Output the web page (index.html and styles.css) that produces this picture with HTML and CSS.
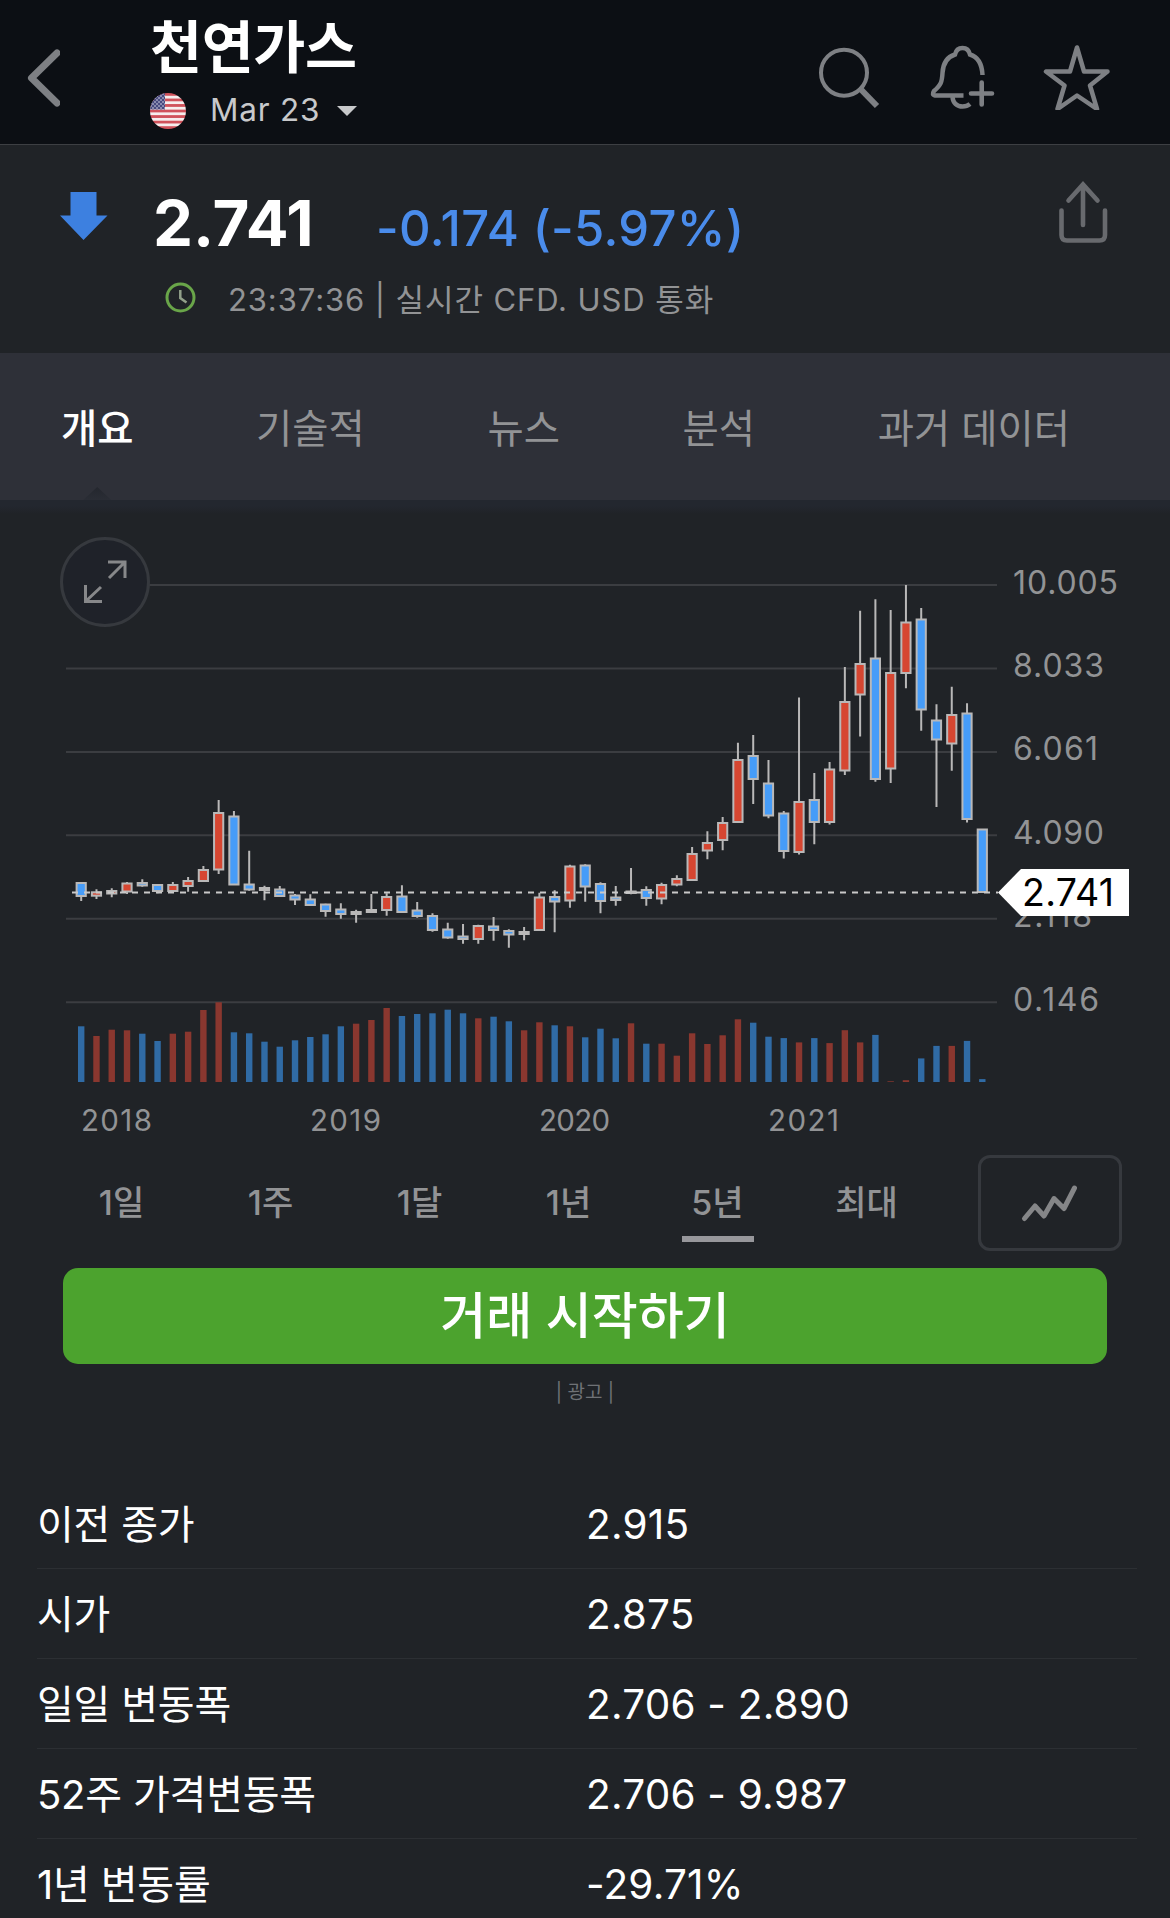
FILE: index.html
```html
<!DOCTYPE html>
<html lang="ko">
<head>
    <meta charset="UTF-8">
    <meta name="viewport" content="width=device-width, initial-scale=1.0">
    <title>천연가스</title>
    <link rel="stylesheet" href="styles.css">
</head>
<body>
    <header class="topbar">
        <svg class="back" width="34" height="60" viewBox="26 48 34 60">
            <path d="M57 53L31.500 78L57 103"/>
        </svg>
        <div class="heading">
            <h1>천연가스</h1>
            <div class="contract">
                <svg width="36" height="36" viewBox="0 0 36 36">
                    <defs>
                        <clipPath id="round"><circle cx="18" cy="18" r="18"/></clipPath>
                        <pattern id="stripes" width="36" height="5.540" patternUnits="userSpaceOnUse">
                            <rect width="36" height="5.540" fill="#f6eeee"/>
                            <rect width="36" height="2.770" fill="#d0525b"/>
                        </pattern>
                        <pattern id="stars" width="4" height="4" patternUnits="userSpaceOnUse">
                            <rect width="4" height="4" fill="#484a80"/>
                            <circle cx="1" cy="1" r=".8" fill="#dcdcea"/>
                            <circle cx="3" cy="3" r=".8" fill="#dcdcea"/>
                        </pattern>
                    </defs>
                    <g clip-path="url(#round)">
                        <rect width="36" height="36" fill="url(#stripes)"/>
                        <rect width="15" height="16.500" fill="url(#stars)"/>
                    </g>
                </svg>
                <span>Mar 23</span>
                <i class="caret"></i>
            </div>
        </div>
        <div class="actions">
            <svg width="64" height="64" viewBox="816 46 64 64">
                <circle cx="844" cy="72.700" r="23" stroke-width="4"/>
                <path d="M861 89.500L877 106" stroke-width="6"/>
            </svg>
            <svg width="68" height="68" viewBox="928 44 68 68" stroke-width="4.500">
                <path d="M963.500 95.500H935Q931.500 95 934 91C941 85 942 82 942.500 73C943 63 947 57 955 54.500C956 50 959 48 962.500 48S969 50 970 54.500C978 57 982 63 982.500 75"/>
                <path d="M952.500 97C953 103 957 106.500 962.500 106.500Q967 106.500 970 104"/>
                <path d="M981.700 82.500V104.500M971 93.500H992" stroke-width="4.600" stroke-linecap="round"/>
            </svg>
            <svg width="70" height="68" viewBox="1042 42 70 68" stroke-width="4.500">
                <path d="M1077 47.500L1084 71.500H1107.500L1090 85.500L1097 109L1077 95.500L1057.500 109L1064.500 85.500L1046 71.500H1070Z" stroke-linejoin="round"/>
            </svg>
        </div>
    </header>

    <section class="quote">
        <svg class="down" width="48" height="48" viewBox="0 0 48 48">
            <path d="M10.500 0H36.500V23.500H47.500L23.500 48L0 23.500H10.500Z"/>
        </svg>
        <div class="quote-body">
            <div class="prices">
                <span class="last">2.741</span>
                <span class="change">-0.174 (-5.97%)</span>
            </div>
            <div class="time">
                <svg width="31" height="31" viewBox="0 0 31 31">
                    <circle cx="15.500" cy="15.500" r="13.500"/>
                    <path d="M15.300 8V16L21.500 20.500"/>
                </svg>
                <span>23:37:36 | 실시간 CFD. USD 통화</span>
            </div>
        </div>
        <svg class="share" width="50" height="64" viewBox="1058 181 50 64">
            <path d="M1083 225V185M1068.500 200.500L1083 184.500L1097.500 200.500M1061.500 210.500V235Q1061.500 240.500 1067 240.500H1099.500Q1105 240.500 1105 235V210.500"/>
        </svg>
    </section>

    <nav class="tabs">
        <a class="active">개요</a>
        <a>기술적</a>
        <a>뉴스</a>
        <a>분석</a>
        <a>과거 데이터</a>
    </nav>

    <section class="chart">
        <svg id="chart" width="1170" height="640" viewBox="0 500 1170 640"></svg>
        <button class="expand">
            <svg width="46" height="46" viewBox="82 559 46 46">
                <path d="M108 562H125V578M125 562L109 578M85.500 585V601.500H102M85.500 601.500L101 587"/>
            </svg>
        </button>
    </section>

    <div class="periods">
        <a>1일</a>
        <a>1주</a>
        <a>1달</a>
        <a>1년</a>
        <a class="selected">5년</a>
        <a>최대</a>
        <button class="chart-type">
            <svg width="60" height="40" viewBox="1021 1183 60 40">
                <path d="M1025.500 1218.500L1036 1206L1045 1216L1055 1198.500L1065 1208.500L1075.500 1188"/>
            </svg>
        </button>
    </div>

    <button class="trade">거래 시작하기</button>
    <div class="ad">| 광고 |</div>

    <dl class="stats">
        <div><dt>이전 종가</dt><dd>2.915</dd></div>
        <div><dt>시가</dt><dd>2.875</dd></div>
        <div><dt>일일 변동폭</dt><dd>2.706 - 2.890</dd></div>
        <div><dt>52주 가격변동폭</dt><dd>2.706 - 9.987</dd></div>
        <div><dt>1년 변동률</dt><dd>-29.71%</dd></div>
    </dl>

    <script src="chart.js"></script>
</body>
</html>
```
FILE: styles.css
```css
* {
    box-sizing: border-box;
}
body {
    margin: 0;
    width: 1170px;
    height: 1918px;
    overflow: hidden;
    background-color: #202327;
    color: #fff;
    font-family: Inter, "Noto Sans CJK KR", sans-serif;
}
svg {
    display: block;
    fill: none;
    flex: none;
}
button {
    border: none;
    padding: 0;
    font-family: inherit;
    color: inherit;
}

/* top bar */
.topbar {
    display: flex;
    height: 145px;
    background-color: #0c0f14;
    border-bottom: 1px solid #3d3f43;
    padding: 0 58px 0 26px;
}
.back {
    margin-top: 48px;
    stroke: #7e8084;
    stroke-width: 7;
    stroke-linecap: round;
    stroke-linejoin: round;
}
.heading {
    margin-left: 90px;
    flex: 1;
}
h1 {
    margin: 15px 0 0;
    font-size: 56.5px;
    line-height: 66px;
    font-weight: 700;
    letter-spacing: -0.3px;
}
.contract {
    display: flex;
    align-items: center;
    height: 36px;
    margin-top: 12px;
    font-size: 31.5px;
    line-height: 34px;
    color: #c8c9cb;
    letter-spacing: 0.8px;
}
.contract span {
    margin: -2px 17px 0 24px;
}
.caret {
    border: 10px solid transparent;
    border-top-color: #c8c9cb;
    border-bottom: none;
}
.actions {
    display: flex;
    margin-top: 42px;
    stroke: #7e8084;
}
.actions svg:nth-child(1) {
    margin: 4px 48px 0 0;
}
.actions svg:nth-child(2) {
    margin: 2px 46px 0 0;
}

/* quote */
.quote {
    display: flex;
    height: 208px;
    padding: 0 62px 0 60px;
}
.down {
    margin-top: 47px;
    fill: #3d80e0;
}
.quote-body {
    flex: 1;
    margin-left: 45px;
    padding-top: 38px;
}
.prices {
    display: flex;
    align-items: baseline;
    height: 80px;
    line-height: 80px;
}
.last {
    width: 223px;
    font-size: 63.5px;
    font-weight: 700;
}
.change {
    font-size: 49px;
    font-weight: 500;
    letter-spacing: 0.35px;
    color: #4a8ceb;
}
.time {
    display: flex;
    align-items: center;
    height: 40px;
    margin: 14px 0 0 12px;
    font-size: 31px;
    letter-spacing: 0.9px;
    color: #929395;
}
.time svg {
    margin-right: 32px;
    stroke: #92a08a;
    stroke-width: 2.5;
}
.time circle {
    stroke: #69a549;
    stroke-width: 3;
}
.share {
    margin-top: 36px;
    stroke: #686a6e;
    stroke-width: 4.6;
    stroke-linecap: round;
}

/* tabs */
.tabs {
    display: flex;
    justify-content: space-between;
    height: 147px;
    padding: 0 100px 0 61px;
    background-color: #2e3038;
    font-size: 39.4px;
    line-height: 152px;
    color: #929395;
}
.tabs .active {
    position: relative;
    color: #fff;
    font-weight: 500;
}
.tabs .active::after {
    content: "";
    position: absolute;
    left: 50%;
    bottom: 0;
    width: 28px;
    height: 13px;
    margin-left: -14px;
    background-image: linear-gradient(#24272e, #2a2d35);
    clip-path: polygon(50% 0, 100% 100%, 0 100%);
}

/* chart */
.chart {
    position: relative;
    height: 640px;
    background-image: linear-gradient(#23272f, #23272f 6px, #202327 14px);
}
.grid {
    stroke: #3b3d41;
    stroke-width: 2;
}
.label {
    fill: #929395;
    font-size: 32px;
}
.year {
    fill: #929395;
    font-size: 29.5px;
}
.candle {
    stroke: #b9b8b8;
    stroke-width: 2;
}
.candle.up {
    fill: #d64631;
}
.candle.down-day {
    fill: #469cf8;
}
.volume.up {
    fill: #8a372f;
}
.volume.down-day {
    fill: #306ba5;
}
.now {
    stroke: #c9c9c9;
    stroke-width: 2;
    stroke-dasharray: 6 6;
}
.tag {
    fill: #fff;
}
.tag-text {
    fill: #000;
    font-size: 37.5px;
}
.expand {
    position: absolute;
    left: 60px;
    top: 37px;
    width: 90px;
    height: 90px;
    border: 3px solid #36393e;
    border-radius: 50%;
    background-color: #1f2229;
}
.expand svg {
    margin: auto;
    stroke: #87888a;
    stroke-width: 3;
}

/* periods */
.periods {
    display: grid;
    grid-template-columns: repeat(6, 149px) 144px;
    justify-items: center;
    height: 128px;
    padding: 15px 0 0 47px;
    font-size: 34px;
    line-height: 96px;
    font-weight: 500;
    color: #929395;
}
.periods .selected {
    width: 72px;
    height: 87px;
    text-align: center;
    border-bottom: 6px solid #97979b;
}
.chart-type {
    width: 144px;
    height: 96px;
    margin-left: 74px;
    border: 3px solid #36393e;
    border-radius: 12px;
    background: none;
}
.chart-type svg {
    margin: -1px auto 0;
    stroke: #858688;
    stroke-width: 5;
    stroke-linecap: round;
    stroke-linejoin: round;
}

.trade {
    display: block;
    width: 1044px;
    height: 96px;
    margin: 0 63px;
    padding-bottom: 8px;
    border-radius: 15px;
    background-color: #4ca32e;
    font-size: 50px;
    font-weight: 500;
}
.ad {
    height: 115px;
    padding-top: 15px;
    text-align: center;
    font-size: 19px;
    line-height: 28px;
    color: #6f7276;
}

/* stats */
.stats {
    margin: 0 33px 0 37px;
    font-size: 40px;
}
.stats div {
    display: grid;
    grid-template-columns: 549px 1fr;
    height: 90px;
    line-height: 91px;
    border-bottom: 1px solid #2c2f33;
}
.stats dt {
    letter-spacing: -0.2px;
}
.stats dd {
    margin: 0;
    font-size: 40.5px;
    letter-spacing: 0.2px;
}
```
FILE: chart.js
```javascript
// [direction, high, body top, body bottom, low, volume]
const candles = [
    ['d', 882.3, 883, 896, 901, 55.7],
    ['u', 889.3, 892.3, 895.7, 899, 46],
    ['u', 888.3, 891, 893.5, 897.3, 52.3],
    ['u', 882, 883.5, 891.5, 894, 51.7],
    ['d', 879.3, 883, 885.5, 886.7, 48.3],
    ['d', 884, 885, 891, 893.3, 41],
    ['u', 882, 885, 891, 892.7, 48.3],
    ['u', 877, 881, 886, 891.7, 50.3],
    ['u', 866, 870, 881, 882, 72],
    ['u', 800, 813, 869.5, 874, 79.7],
    ['d', 811, 816.5, 884.5, 885, 49.7],
    ['d', 850.7, 884.5, 889.5, 890.7, 48.7],
    ['d', 885.7, 888, 890, 900.3, 40.3],
    ['d', 886, 889.5, 896, 896.7, 35.3],
    ['d', 894, 895.5, 899.5, 905, 41.7],
    ['d', 894.3, 899.5, 905, 905.7, 45],
    ['d', 903.7, 904.5, 911, 916.7, 47.7],
    ['d', 903.3, 909.5, 914, 918.7, 55.7],
    ['u', 909.7, 912, 914, 922.7, 58.3],
    ['u', 894, 910, 912, 912.7, 62],
    ['u', 893.3, 897, 910, 915.7, 74],
    ['d', 885.3, 896.5, 912, 912.7, 66],
    ['d', 902, 910.5, 916, 917.7, 68],
    ['d', 913.3, 916, 930, 931.7, 68.7],
    ['d', 922.7, 929.5, 937.5, 938.7, 72.3],
    ['d', 924, 936.5, 939, 943.7, 68.7],
    ['u', 924.7, 926, 939, 943.7, 63.7],
    ['d', 917, 926.5, 930, 940.7, 65.3],
    ['d', 929.3, 931, 934.5, 947.7, 60.7],
    ['u', 927, 932, 934, 940.3, 51.7],
    ['u', 892.7, 897.5, 930, 930.7, 59.7],
    ['d', 890.3, 897, 901.5, 932.3, 56.7],
    ['u', 864.7, 866.5, 900.5, 907.7, 55.7],
    ['d', 864.3, 865.5, 886.5, 901.7, 44.7],
    ['d', 882.3, 884, 901, 913.3, 53.3],
    ['d', 886, 897.5, 900, 905.7, 43.7],
    ['u', 868, 891.5, 893, 894.3, 58.7],
    ['d', 886.3, 890, 898, 905.7, 38.3],
    ['u', 882.7, 885, 898.5, 904.3, 38.3],
    ['u', 875.3, 879, 884.5, 886.3, 26.3],
    ['u', 847, 854, 880, 881, 48.7],
    ['u', 831.3, 843, 850.5, 859.3, 38],
    ['u', 817, 823, 840, 850.3, 46.7],
    ['u', 742.7, 760, 822, 823, 62.7],
    ['d', 735, 756, 779, 804, 59.3],
    ['d', 760, 783.5, 815.5, 818.2, 45.3],
    ['d', 811, 813.5, 851, 858.6, 43.9],
    ['u', 697.5, 802, 852, 854.6, 39.6],
    ['d', 772.9, 800, 822, 844.3, 43.9],
    ['u', 762, 769.5, 822, 824.6, 38.9],
    ['u', 667, 702, 770.5, 775, 51.8],
    ['u', 610.7, 664, 694.5, 736.4, 39.6],
    ['d', 599.3, 658.5, 779, 781.8, 47.1],
    ['u', 610, 673, 768.5, 782.9, 0.7],
    ['u', 585, 622.5, 673, 688.2, 1.8],
    ['d', 607.9, 619.5, 709.5, 730.7, 23.6],
    ['d', 704.3, 720.5, 739.5, 807.1, 36.1],
    ['u', 686.8, 715, 743.5, 770.7, 36.1],
    ['d', 703.2, 713.5, 819, 822.5, 41.1],
    ['d', 829.5, 829.5, 892, 892, 2.9]
];
const levels = ['10.005', '8.033', '6.061', '4.090', '2.118', '0.146'];
const levelWidths = [105, 91, 85, 91, 79, 86];
const years = ['2018', '2019', '2020', '2021'];

let out = '';
levels.forEach((text, i) => {
    const y = 585 + i * 83.45;
    out += `<path class="grid" d="M66 ${y}H997"/>`;
    out += `<text class="label" x="1013" y="${y + 8.5}" textLength="${levelWidths[i]}">${text}</text>`;
});

candles.forEach(([dir, high, top, bottom, low, volume], i) => {
    const x = 81.2 + i * 15.273;
    const type = dir === 'u' ? 'up' : 'down-day';
    out += `<path class="candle" d="M${x} ${high}V${top}M${x} ${bottom}V${low}"/>`;
    out += `<rect class="candle ${type}" x="${x - 4.6}" y="${top}" width="9.2" height="${bottom - top}"/>`;
    out += `<rect class="volume ${type}" x="${x - 3.2}" y="${1082 - volume}" width="6.4" height="${volume}"/>`;
});

years.forEach((text, i) => {
    out += `<text class="year" x="${81 + i * 229}" y="1130.5" textLength="71">${text}</text>`;
});

// current price
out += '<path class="now" d="M72 892.5H998"/>';
out += '<path class="tag" d="M998 892.5L1021 869H1129V916H1021Z"/>';
out += '<text class="tag-text" x="1022" y="905.5" textLength="92">2.741</text>';

document.getElementById('chart').innerHTML = out;
```
